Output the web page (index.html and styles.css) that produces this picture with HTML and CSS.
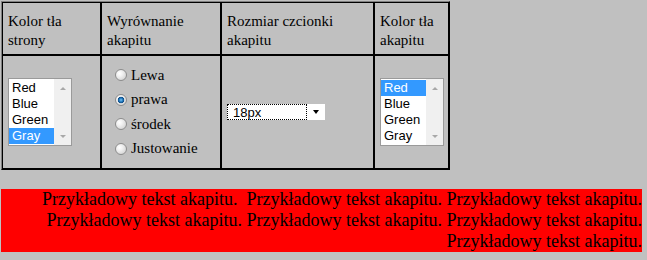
FILE: index.html
```html
<!DOCTYPE html>
<html lang="pl">
<head>
    <meta charset="UTF-8">
    <meta name="viewport" content="width=device-width, initial-scale=1.0">
    <title>Formatowanie akapitu</title>
    <link rel="stylesheet" href="styles.css">
</head>
<body>

    <!-- Panel ustawień -->
    <table class="settings">
        <tr class="head-row">
            <td class="col-page">Kolor tła strony</td>
            <td class="col-align">Wyrównanie akapitu</td>
            <td class="col-size">Rozmiar czcionki akapitu</td>
            <td class="col-bg">Kolor tła akapitu</td>
        </tr>
        <tr class="controls-row">
            <td>
                <div class="listbox" role="listbox" aria-label="Kolor tła strony">
                    <ul class="options">
                        <li>Red</li>
                        <li>Blue</li>
                        <li>Green</li>
                        <li class="selected">Gray</li>
                    </ul>
                    <div class="scrollbar">
                        <span class="arrow-up"></span>
                        <span class="arrow-down"></span>
                    </div>
                </div>
            </td>
            <td>
                <div class="radio-group">
                    <label class="radio"><input type="radio" name="align" value="left"> Lewa</label>
                    <label class="radio"><input type="radio" name="align" value="right" checked> prawa</label>
                    <label class="radio"><input type="radio" name="align" value="center"> środek</label>
                    <label class="radio"><input type="radio" name="align" value="justify"> Justowanie</label>
                </div>
            </td>
            <td>
                <div class="dropdown" role="combobox" aria-label="Rozmiar czcionki akapitu">
                    <span class="dropdown-value">18px</span>
                    <span class="dropdown-button"><span class="arrow-down-black"></span></span>
                </div>
            </td>
            <td>
                <div class="listbox" role="listbox" aria-label="Kolor tła akapitu">
                    <ul class="options">
                        <li class="selected">Red</li>
                        <li>Blue</li>
                        <li>Green</li>
                        <li>Gray</li>
                    </ul>
                    <div class="scrollbar">
                        <span class="arrow-up"></span>
                        <span class="arrow-down"></span>
                    </div>
                </div>
            </td>
        </tr>
    </table>

    <!-- Akapit przykładowy -->
    <p class="sample">Przykładowy tekst akapitu.&nbsp; Przykładowy tekst akapitu. Przykładowy tekst akapitu. Przykładowy tekst akapitu. Przykładowy tekst akapitu. Przykładowy tekst akapitu. Przykładowy tekst akapitu.</p>

</body>
</html>
```

FILE: styles.css
```css
/* Strona */
body {
    margin: 1px;
    background-color: #c0c0c0;
    font-family: "Liberation Serif", "Times New Roman", serif;
    color: #000;
}

/* Tabela ustawień */
.settings {
    border: 1px solid;
    border-color: #808080 #000 #000 #808080;
    border-spacing: 0;
    table-layout: fixed;
    width: 449px;
}

.settings td {
    border: 1px solid #000;
    padding: 5px;
    vertical-align: middle;
    font-size: 15px;
    line-height: 19px;
}

.head-row td {
    padding: 9px 5px 4px;
}

.col-page { width: 87px; }
.col-align { width: 108px; }
.col-size { width: 141px; }
.col-bg { width: 63px; }

.controls-row td {
    height: 102px;
}

/* Lista wyboru */
.listbox {
    display: flex;
    width: 64px;
    height: 68px;
    box-sizing: border-box;
    border: 1px solid #9a9a9a;
    background-color: #fff;
    font-family: "Liberation Sans", Arial, sans-serif;
    font-size: 13px;
}

.options {
    list-style: none;
    margin: 0;
    padding: 1px 0;
    width: 45px;
}

.options li {
    height: 16px;
    line-height: 16px;
    padding-left: 3px;
}

.options li.selected {
    background-color: #3399ff;
    color: #fff;
}

.scrollbar {
    flex: 1;
    display: flex;
    flex-direction: column;
    justify-content: space-between;
    align-items: center;
    padding: 8px 0 7px;
    background-color: #f0f0f0;
}

.arrow-up,
.arrow-down {
    width: 0;
    height: 0;
    border-left: 3px solid transparent;
    border-right: 3px solid transparent;
}

.arrow-up {
    border-bottom: 3px solid #a8a8a8;
}

.arrow-down {
    border-top: 3px solid #a8a8a8;
}

/* Przyciski opcji */
.radio-group {
    display: flex;
    flex-direction: column;
    padding-left: 8px;
}

.radio {
    display: flex;
    align-items: center;
    height: 24.4px;
}

.radio input {
    appearance: none;
    -webkit-appearance: none;
    width: 12px;
    height: 12px;
    margin: 0 4px 0 0;
    border: 1px solid #8d8d8d;
    border-radius: 50%;
    background: radial-gradient(circle at 35% 35%, #fff 0, #f2f2f2 30%, #c9c9c9 100%);
}

.radio input:checked {
    background:
        radial-gradient(circle at 50% 50%, #7fc4f5 0, #2c86c9 1.5px, #0e4b86 3px, transparent 3.6px),
        radial-gradient(circle at 35% 35%, #fff 0, #f2f2f2 30%, #c9c9c9 100%);
}

/* Lista rozwijana */
.dropdown {
    display: flex;
    width: 98px;
    height: 16px;
    background-color: #fff;
    font-family: "Liberation Sans", Arial, sans-serif;
    font-size: 13px;
}

.dropdown-value {
    flex: 1;
    box-sizing: border-box;
    height: 16px;
    border: 1px dotted #000;
    padding: 1px 0 0 5px;
    line-height: 14px;
}

.dropdown-button {
    width: 18px;
    display: flex;
    align-items: center;
    justify-content: center;
}

.arrow-down-black {
    width: 0;
    height: 0;
    border-left: 3.5px solid transparent;
    border-right: 3.5px solid transparent;
    border-top: 4px solid #000;
}

/* Akapit */
.sample {
    margin: 19px 4px 0 0;
    background-color: #ff0000;
    font-size: 18px;
    text-align: right;
}
```
